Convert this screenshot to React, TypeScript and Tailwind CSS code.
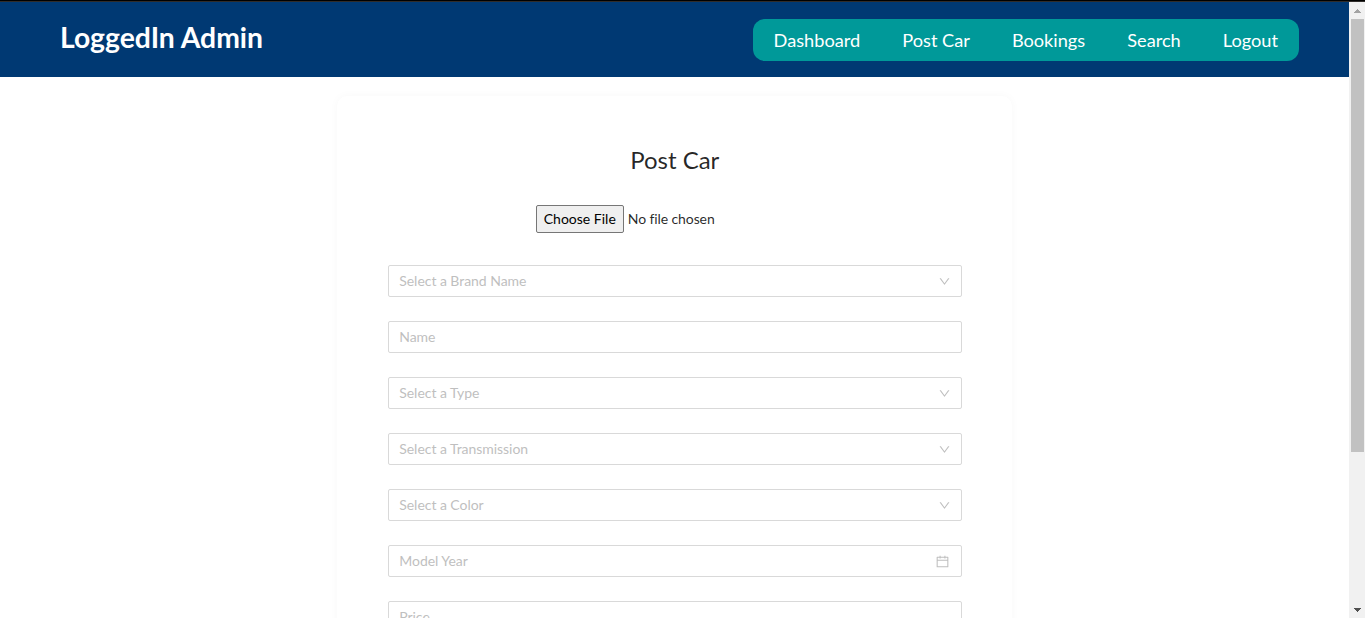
import { AiOutlineCalendar, AiOutlineDown } from "react-icons/ai";

type Field = { label: string; kind: "select" | "text" | "date" };

const links = ["Dashboard", "Post Car", "Bookings", "Search", "Logout"];

const fields: Field[] = [
  { label: "Select a Brand Name", kind: "select" },
  { label: "Name", kind: "text" },
  { label: "Select a Type", kind: "select" },
  { label: "Select a Transmission", kind: "select" },
  { label: "Select a Color", kind: "select" },
  { label: "Model Year", kind: "date" },
  { label: "Price", kind: "text" },
];

function Header() {
  return (
    <header className="flex h-[75px] shrink-0 items-start justify-between bg-[#003973] pr-[50px] pl-[60px] text-white">
      <h1 className="pt-[13px] text-[28.3px] leading-[44px] font-bold">LoggedIn Admin</h1>
      <nav className="mt-[17px] flex h-[42px] items-center gap-[42px] rounded-xl bg-[#009999] px-[21px] text-[18.2px] leading-[42px]">
        {links.map((link) => (
          <a key={link} className="whitespace-nowrap">
            {link}
          </a>
        ))}
      </nav>
    </header>
  );
}

function FormField({ label, kind }: Field) {
  return (
    <div className="flex h-8 shrink-0 items-center justify-between rounded-[2px] border border-[#d9d9d9] bg-white pr-[11px] pl-[10.5px] text-sm text-[#bfbfbf]">
      <span className="tracking-[-0.04px]">{label}</span>
      {kind === "select" && <AiOutlineDown className="-mr-px size-[13px]" />}
      {kind === "date" && <AiOutlineCalendar className="size-[15px]" />}
    </div>
  );
}

function Scrollbar() {
  return (
    <div className="flex w-4 shrink-0 flex-col items-center justify-between bg-[#f1f1f1]">
      <div className="flex w-full flex-col items-center">
        <svg className="h-[17px] w-4" viewBox="0 0 16 17" shapeRendering="crispEdges">
          <path d="M5 11h7L8.5 7z" fill="#a3a3a3" />
        </svg>
        <div className="ml-px h-[433px] w-[13px] bg-[#c1c1c1]" />
      </div>
      <svg className="h-[17px] w-4" viewBox="0 0 16 17" shapeRendering="crispEdges">
        <path d="M5 7h7L8.5 11z" fill="#505050" />
      </svg>
    </div>
  );
}

export default function App() {
  return (
    <div className="flex h-[618px] flex-col overflow-hidden bg-white font-['Lato','Noto_Sans',sans-serif]">
      <div className="h-0.5 shrink-0 border-b border-[#302d2b] bg-black" />
      <div className="flex min-h-0 flex-1">
        <div className="flex min-w-0 flex-1 flex-col overflow-hidden">
          <Header />
          <main className="mx-auto mt-[19px] flex h-[720px] w-1/2 shrink-0 flex-col rounded-[10px] bg-white pr-[50px] pl-[50.5px] pt-[45px] shadow-[0_0_10px_rgba(0,0,0,0.03)]">
            <h2 className="text-center text-2xl leading-[38px] text-black/85">Post Car</h2>
            <div className="mt-[26px] ml-[148px] flex h-7 items-center gap-1 text-sm">
              <button className="h-7 rounded-[2px] border border-[#767676] bg-[#efefef] px-[7px] whitespace-nowrap text-black">
                Choose File
              </button>
              <span className="tracking-[-0.1px] text-black/85">No file chosen</span>
            </div>
            <form className="mt-8 flex flex-col gap-6">
              {fields.map((field) => (
                <FormField key={field.label} {...field} />
              ))}
            </form>
          </main>
        </div>
        <Scrollbar />
      </div>
    </div>
  );
}
